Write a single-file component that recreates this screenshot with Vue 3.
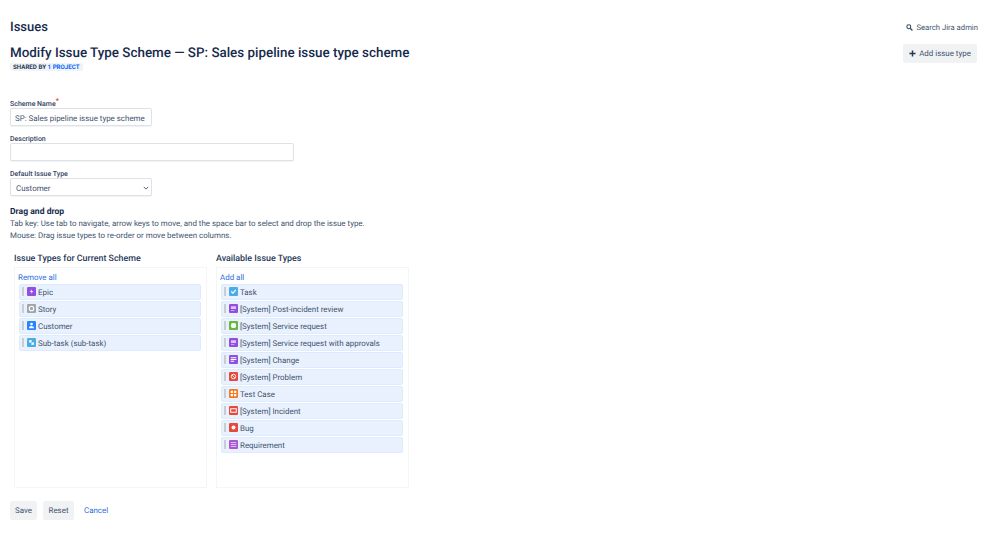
<script setup>
const current = [
  { name: 'Epic', color: '#904ee2', glyph: 'bolt' },
  { name: 'Story', color: '#a0a4ab', glyph: 'ring' },
  { name: 'Customer', color: '#2684ff', glyph: 'person' },
  { name: 'Sub-task (sub-task)', color: '#4bade8', glyph: 'sub' }
]
const available = [
  { name: 'Task', color: '#4bade8', glyph: 'check' },
  { name: '[System] Post-incident review', color: '#904ee2', glyph: 'doc' },
  { name: '[System] Service request', color: '#63ba3c', glyph: 'bubble' },
  { name: '[System] Service request with approvals', color: '#904ee2', glyph: 'doc' },
  { name: '[System] Change', color: '#904ee2', glyph: 'change' },
  { name: '[System] Problem', color: '#e5493a', glyph: 'problem' },
  { name: 'Test Case', color: '#f5791f', glyph: 'grid' },
  { name: '[System] Incident', color: '#e5493a', glyph: 'incident' },
  { name: 'Bug', color: '#e5493a', glyph: 'dot' },
  { name: 'Requirement', color: '#a855d6', glyph: 'lines' }
]
const columns = [
  { title: 'Issue Types for Current Scheme', action: 'Remove all', items: current },
  { title: 'Available Issue Types', action: 'Add all', items: available }
]
</script>

<template>
  <div class="page">
    <header class="top">
      <h2 class="section">Issues</h2>
      <a class="search">
        <svg viewBox="0 0 10 10" width="7" height="7"><circle cx="4" cy="4" r="2.8" fill="none" stroke="#344563" stroke-width="1.5"/><path d="M6 6l3.2 3.2" stroke="#344563" stroke-width="1.8"/></svg>
        Search Jira admin
      </a>
    </header>
    <div class="head">
      <div>
        <h1 class="title">Modify Issue Type Scheme — SP: Sales pipeline issue type scheme</h1>
        <div class="lozenge">SHARED BY <span class="blue">1 PROJECT</span></div>
      </div>
      <button class="btn add" type="button">
        <svg viewBox="0 0 8 8" width="7" height="7"><path d="M4 0.5v7M0.5 4h7" stroke="#253858" stroke-width="1.7"/></svg>
        Add issue type
      </button>
    </div>

    <form class="form" @submit.prevent>
      <label class="lab first">Scheme Name<sup class="req">*</sup></label>
      <input class="field short" value="SP: Sales pipeline issue type scheme" />
      <label class="lab desc">Description</label>
      <input class="field long" />
      <label class="lab def">Default Issue Type</label>
      <div class="field short select">
        <span>Customer</span>
        <svg viewBox="0 0 8 5" width="6" height="4"><path d="M1 1l3 3 3-3" fill="none" stroke="#42526e" stroke-width="1.2"/></svg>
      </div>

      <h3 class="dd">Drag and drop</h3>
      <p class="help">Tab key: Use tab to navigate, arrow keys to move, and the space bar to select and drop the issue type.</p>
      <p class="help">Mouse: Drag issue types to re-order or move between columns.</p>

      <div class="cols">
        <section v-for="col in columns" :key="col.title" class="col">
          <h3 class="col-title">{{ col.title }}</h3>
          <div class="box">
            <a class="link action">{{ col.action }}</a>
            <ul class="list">
              <li v-for="it in col.items" :key="it.name" class="row">
                <span class="grip"></span>
                <svg class="ico" viewBox="0 0 16 16" width="9" height="9">
                  <rect width="16" height="16" rx="2" :fill="it.color" />
                  <path v-if="it.glyph === 'bolt'" d="M9 3.500L5 9h3l-1 3.500L11 7H8z" fill="#fff" />
                  <circle v-else-if="it.glyph === 'ring'" cx="8" cy="8" r="4" fill="none" stroke="#fff" stroke-width="2" />
                  <g v-else-if="it.glyph === 'problem'"><circle cx="8" cy="8" r="4" fill="none" stroke="#fff" stroke-width="1.600" /><path d="M5.500 5.500l5 5" stroke="#fff" stroke-width="1.400" /></g>
                  <path v-else-if="it.glyph === 'person'" d="M8 3a2.500 2.500 0 110 5 2.500 2.500 0 010-5zM3.500 13c0-2.500 2-4 4.500-4s4.500 1.500 4.500 4z" fill="#fff" />
                  <path v-else-if="it.glyph === 'sub'" d="M3.500 3.500h5v5h-5zM7.500 7.500h5v5h-5z" fill="#fff" stroke="#4bade8" stroke-width=".6" />
                  <path v-else-if="it.glyph === 'check'" d="M4 8l3 3 5-6" fill="none" stroke="#fff" stroke-width="2" />
                  <path v-else-if="it.glyph === 'doc'" d="M3.500 4h9v5h-9zM3.500 10.500h6v1.500h-6z" fill="#dcc4f7" />
                  <rect v-else-if="it.glyph === 'bubble'" x="3.500" y="3.500" width="9" height="9" rx="3" fill="#fff" />
                  <path v-else-if="it.glyph === 'change'" d="M3 5h10M3 8h10M3 11h6" stroke="#fff" stroke-width="1.800" />
                  <path v-else-if="it.glyph === 'grid'" d="M3 3h4v4H3zM9 3h4v4H9zM3 9h4v4H3zM9 9h4v4H9z" fill="#fff" />
                  <path v-else-if="it.glyph === 'incident'" d="M3 5h10v6H3z" fill="none" stroke="#fff" stroke-width="1.800" />
                  <circle v-else-if="it.glyph === 'dot'" cx="8" cy="8" r="3.500" fill="#fff" />
                  <path v-else-if="it.glyph === 'lines'" d="M3 4.500h10M3 8h10M3 11.500h10" stroke="#e9d5f5" stroke-width="1.500" />
                </svg>
                <span class="name">{{ it.name }}</span>
              </li>
            </ul>
          </div>
        </section>
      </div>

      <div class="actions">
        <button class="btn save" type="button">Save</button>
        <button class="btn reset" type="button">Reset</button>
        <a class="link cancel">Cancel</a>
      </div>
    </form>
  </div>
</template>

<style>
html, body { margin: 0; background: #fff; }
</style>

<style scoped>
.page {
  width: 999px;
  height: 536px;
  box-sizing: border-box;
  padding: 18px 21px 0 10px;
  overflow: hidden;
  font-family: Roboto, "Open Sans", sans-serif;
  font-size: 7.930px;
  text-rendering: geometricPrecision;
  color: #42526e;
}
.top { display: flex; justify-content: space-between; align-items: center; height: 17px; }
.section { margin: 2px 0 0; font-size: 13px; font-weight: 500; color: #172b4d; }
.search { display: flex; align-items: center; gap: 3px; color: #42526e; position: relative; top: 1px; font-size: 7.700px; }
.head { display: flex; justify-content: space-between; align-items: flex-start; margin-top: 10px; }
.title { margin: 0; font-size: 13.400px; line-height: 18px; font-weight: 500; color: #172b4d; }
.lozenge { display: inline-block; margin: 0; padding: 0 3px; height: 8px; line-height: 8px; background: #f1f3f6; border-radius: 2px; font-size: 6.200px; font-weight: 700; color: #253858; vertical-align: top; }
.blue { color: #0065ff; }
.btn { border: 0; border-radius: 2px; background: #f1f2f4; color: #42526e; font: inherit; height: 19px; padding: 0; text-rendering: geometricPrecision; }
.add { display: flex; align-items: center; gap: 3px; margin: -1px 1px 0 0; width: 74px; justify-content: center; }
.save { width: 27px; }
.reset { width: 31px; }
.form { display: flex; flex-direction: column; align-items: flex-start; }
.lab { font-size: 7px; font-weight: 500; color: #344563; height: 10px; line-height: 13px; }
.lab.first { margin-top: 26px; line-height: 12px; }
.lab.desc { margin-top: 7px; }
.lab.def { margin-top: 7px; }
.req { color: #de350b; font-size: 7px; line-height: 0; }
.field { box-sizing: border-box; height: 18px; margin: 0; border: 1px solid #dfe1e6; border-radius: 2px; background: #fff; font: inherit; color: #42526e; padding: 2px 4px 0; box-shadow: 0 1px 1px rgba(9, 30, 66, .06); outline: none; text-rendering: geometricPrecision; }
.short { width: 142px; }
.long { width: 284px; }
.select { display: flex; justify-content: space-between; align-items: center; padding: 2px 2px 0 5px; }
.dd { margin: 11px 0 0; font-size: 8.600px; line-height: 11px; font-weight: 700; color: #172b4d; }
.help { margin: 0; line-height: 12px; }
.cols { display: flex; gap: 9px; margin: 10px 0 0 4px; }
.col { width: 193px; }
.col-title { margin: 0 0 1px; font-size: 8.900px; line-height: 14px; font-weight: 500; color: #253858; }
.box { box-sizing: border-box; height: 221px; border: 1px solid #f4f5f7; padding: 4px 5px 0 3px; }
.link { color: #2a6fdb; }
.action { display: block; line-height: 12px; }
.list { list-style: none; margin: 0; padding: 0 0 0 1px; display: flex; flex-direction: column; gap: 1px; }
.row { box-sizing: border-box; height: 16px; display: flex; align-items: center; background: #e8f1fd; border: 1px solid #deebff; border-radius: 2px; }
.grip { width: 2px; height: 9px; background: #c8ccd3; margin: -1px 3px 0 2px; }
.ico { margin: -1px 2px 0 0; flex: none; }
.name { line-height: 11px; padding-top: 1px; }
.actions { display: flex; align-items: center; gap: 6px; margin-top: 13px; }
.cancel { margin-left: 4px; }
</style>
